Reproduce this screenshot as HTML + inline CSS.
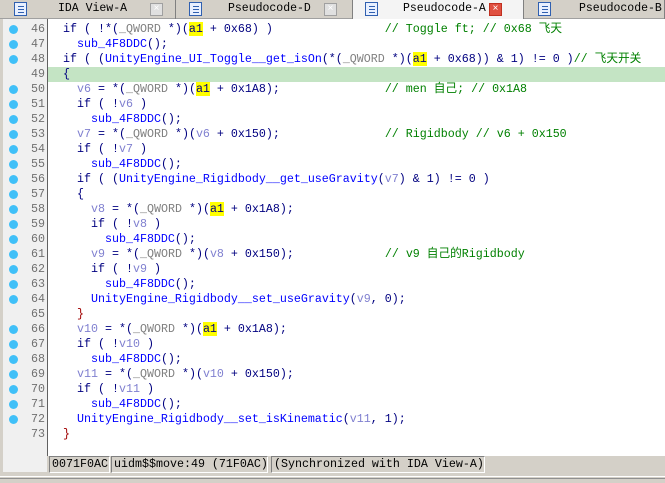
<!DOCTYPE html>
<html><head><meta charset="utf-8"><style>
*{margin:0;padding:0;box-sizing:border-box}
body{width:665px;height:483px;overflow:hidden;background:#d4d0c8;position:relative;font-family:"Liberation Mono","Noto Sans CJK SC",monospace;font-size:11.67px}
.tabs{position:absolute;left:0;top:0;width:665px;height:19px;background:#d4d0c8;border-bottom:1px solid #a0a0a0}
.tab{position:absolute;top:0;height:19px;border-right:1px solid #808080;color:#000;font-family:"Liberation Mono",monospace;font-size:11.5px;line-height:18px}
.tab .ic{position:absolute;left:14px;top:2px;width:13px;height:14px;border:1px solid #3060b0;background:#e8f0ff}
.tab .ic:before{content:"";position:absolute;left:3px;top:3px;width:6px;height:1px;background:#3060b0;box-shadow:0 3px 0 #3060b0,0 6px 0 #3060b0}
.tab .x{position:absolute;top:3px;width:13px;height:13px;border:1px solid #a0a0a0;background:#e0e0e0;color:#fff;font-size:10px;line-height:11px;text-align:center}
.gut{position:absolute;left:0;top:19px;width:47px;height:453px;background:#f0f0f0;border-left:3px solid #d4d0c8}
.vl{position:absolute;left:47px;top:19px;width:1px;height:437px;background:#606060}
.code{position:absolute;left:48px;top:19px;width:617px;height:437px;background:#fff}
.ln{position:absolute;left:0;width:665px;height:15px;line-height:15px;white-space:pre}
.num{position:absolute;right:620px;color:#707070;text-align:right}
.dot{position:absolute;left:9px;top:3px;width:9px;height:9px;border-radius:50%;background:#40c0f8}
.t{position:absolute;left:49px;color:#000080}
.f{color:#0000ff}.v{color:#8080d0}.g{color:#808080}.c{color:#008000}.b{color:#a00000}.h{background:#ffff00}
.sb{position:absolute;top:456px;height:17px;background:#d4d0c8;border:1px solid #fff;border-top-color:#808080;border-left-color:#808080;line-height:15px;white-space:pre;color:#000;padding-left:2px}
</style></head><body>
<div class="tabs">
<div class="tab" style="left:0;width:176px"><span class="ic"></span><span style="position:absolute;left:58px">IDA View-A</span><span class="x" style="left:150px">×</span></div>
<div class="tab" style="left:176px;width:177px"><span class="ic" style="left:13px"></span><span style="position:absolute;left:52px">Pseudocode-D</span><span class="x" style="left:148px">×</span></div>
<div class="tab" style="left:353px;width:171px;background:#f4f4f4;height:20px"><span class="ic" style="left:12px"></span><span style="position:absolute;left:50px">Pseudocode-A</span><span class="x" style="left:136px;background:#e05040;border-color:#c03020">×</span></div>
<div class="tab" style="left:524px;width:141px"><span class="ic" style="left:14px"></span><span style="position:absolute;left:55px">Pseudocode-B</span></div>
</div>
<div class="gut"></div>
<div class="code"></div>
<div style="position:absolute;left:48px;top:67px;width:617px;height:15px;background:#c4e4c4"></div>
<div class="vl"></div>
<div class="ln" style="top:22px"><span class="dot"></span><span class="num">46</span><span class="t">  if ( !*(<span class="g">_QWORD</span> *)(<span class="h">a1</span> + 0x68) )                <span class="c">// Toggle ft; // 0x68 飞天</span></span></div>
<div class="ln" style="top:37px"><span class="dot"></span><span class="num">47</span><span class="t">    <span class="f">sub_4F8DDC</span>();</span></div>
<div class="ln" style="top:52px"><span class="dot"></span><span class="num">48</span><span class="t">  if ( (<span class="f">UnityEngine_UI_Toggle__get_isOn</span>(*(<span class="g">_QWORD</span> *)(<span class="h">a1</span> + 0x68)) &amp; 1) != 0 )<span class="c">// 飞天开关</span></span></div>
<div class="ln" style="top:67px"><span class="num">49</span><span class="t">  {</span></div>
<div class="ln" style="top:82px"><span class="dot"></span><span class="num">50</span><span class="t">    <span class="v">v6</span> = *(<span class="g">_QWORD</span> *)(<span class="h">a1</span> + 0x1A8);               <span class="c">// men 自己; // 0x1A8</span></span></div>
<div class="ln" style="top:97px"><span class="dot"></span><span class="num">51</span><span class="t">    if ( !<span class="v">v6</span> )</span></div>
<div class="ln" style="top:112px"><span class="dot"></span><span class="num">52</span><span class="t">      <span class="f">sub_4F8DDC</span>();</span></div>
<div class="ln" style="top:127px"><span class="dot"></span><span class="num">53</span><span class="t">    <span class="v">v7</span> = *(<span class="g">_QWORD</span> *)(<span class="v">v6</span> + 0x150);               <span class="c">// Rigidbody // v6 + 0x150</span></span></div>
<div class="ln" style="top:142px"><span class="dot"></span><span class="num">54</span><span class="t">    if ( !<span class="v">v7</span> )</span></div>
<div class="ln" style="top:157px"><span class="dot"></span><span class="num">55</span><span class="t">      <span class="f">sub_4F8DDC</span>();</span></div>
<div class="ln" style="top:172px"><span class="dot"></span><span class="num">56</span><span class="t">    if ( (<span class="f">UnityEngine_Rigidbody__get_useGravity</span>(<span class="v">v7</span>) &amp; 1) != 0 )</span></div>
<div class="ln" style="top:187px"><span class="dot"></span><span class="num">57</span><span class="t">    {</span></div>
<div class="ln" style="top:202px"><span class="dot"></span><span class="num">58</span><span class="t">      <span class="v">v8</span> = *(<span class="g">_QWORD</span> *)(<span class="h">a1</span> + 0x1A8);</span></div>
<div class="ln" style="top:217px"><span class="dot"></span><span class="num">59</span><span class="t">      if ( !<span class="v">v8</span> )</span></div>
<div class="ln" style="top:232px"><span class="dot"></span><span class="num">60</span><span class="t">        <span class="f">sub_4F8DDC</span>();</span></div>
<div class="ln" style="top:247px"><span class="dot"></span><span class="num">61</span><span class="t">      <span class="v">v9</span> = *(<span class="g">_QWORD</span> *)(<span class="v">v8</span> + 0x150);             <span class="c">// v9 自己的Rigidbody</span></span></div>
<div class="ln" style="top:262px"><span class="dot"></span><span class="num">62</span><span class="t">      if ( !<span class="v">v9</span> )</span></div>
<div class="ln" style="top:277px"><span class="dot"></span><span class="num">63</span><span class="t">        <span class="f">sub_4F8DDC</span>();</span></div>
<div class="ln" style="top:292px"><span class="dot"></span><span class="num">64</span><span class="t">      <span class="f">UnityEngine_Rigidbody__set_useGravity</span>(<span class="v">v9</span>, 0);</span></div>
<div class="ln" style="top:307px"><span class="num">65</span><span class="t">    <span class="b">}</span></span></div>
<div class="ln" style="top:322px"><span class="dot"></span><span class="num">66</span><span class="t">    <span class="v">v10</span> = *(<span class="g">_QWORD</span> *)(<span class="h">a1</span> + 0x1A8);</span></div>
<div class="ln" style="top:337px"><span class="dot"></span><span class="num">67</span><span class="t">    if ( !<span class="v">v10</span> )</span></div>
<div class="ln" style="top:352px"><span class="dot"></span><span class="num">68</span><span class="t">      <span class="f">sub_4F8DDC</span>();</span></div>
<div class="ln" style="top:367px"><span class="dot"></span><span class="num">69</span><span class="t">    <span class="v">v11</span> = *(<span class="g">_QWORD</span> *)(<span class="v">v10</span> + 0x150);</span></div>
<div class="ln" style="top:382px"><span class="dot"></span><span class="num">70</span><span class="t">    if ( !<span class="v">v11</span> )</span></div>
<div class="ln" style="top:397px"><span class="dot"></span><span class="num">71</span><span class="t">      <span class="f">sub_4F8DDC</span>();</span></div>
<div class="ln" style="top:412px"><span class="dot"></span><span class="num">72</span><span class="t">    <span class="f">UnityEngine_Rigidbody__set_isKinematic</span>(<span class="v">v11</span>, 1);</span></div>
<div class="ln" style="top:427px"><span class="num">73</span><span class="t">  <span class="b">}</span></span></div>
<div class="sb" style="left:49px;width:61px">0071F0AC</div>
<div class="sb" style="left:111px;width:157px">uidm$$move:49 (71F0AC)</div>
<div class="sb" style="left:271px;width:214px">(Synchronized with IDA View-A)</div>
<div style="position:absolute;left:0;top:476px;width:665px;height:1px;background:#fff"></div>
<div style="position:absolute;left:0;top:478px;width:665px;height:1px;background:#909090"></div>
</body></html>
